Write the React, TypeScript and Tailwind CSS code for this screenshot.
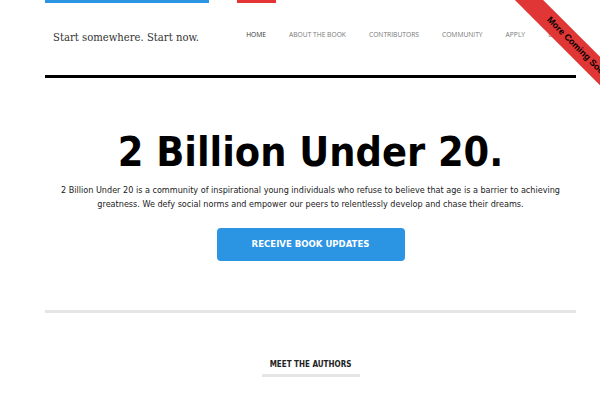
import React from "react";

const navItems = ["HOME", "ABOUT THE BOOK", "CONTRIBUTORS", "COMMUNITY", "APPLY", "BLOG"];

export default function App() {
  return (
    <div className="relative w-[600px] h-[400px] overflow-hidden bg-white">
      <div className="ml-[45px] w-[531px]">
        {/* top accent bars */}
        <div className="flex h-[3px]">
          <div className="w-[164px] h-[3px] bg-[#2b94e3]" />
          <div className="ml-[28px] w-[39px] h-[3px] bg-[#e53434]" />
        </div>

        {/* header */}
        <div className="flex items-start h-[72px]">
          <div
            className="pl-[8px] pt-[29px] text-[11.2px] text-[#333] leading-none"
            style={{ fontFamily: '"DejaVu Serif Condensed", "DejaVu Serif", serif' }}
          >
            Start somewhere. Start now.
          </div>
          <nav
            className="ml-auto flex gap-[23px] pt-[29px] pr-[10px] text-[6.7px] leading-none"
            style={{ fontFamily: '"Open Sans", sans-serif' }}
          >
            {navItems.map((n, i) => (
              <span key={n} className={i === 0 ? "text-[#333]" : "text-[#777]"}>
                {n}
              </span>
            ))}
          </nav>
        </div>
        <div className="h-[3px] bg-black" />

        {/* hero */}
        <div
          className="flex flex-col items-center pt-[54px]"
          style={{ fontFamily: '"DejaVu Sans Condensed", "DejaVu Sans", sans-serif' }}
        >
          <h1 className="text-[41px] font-bold leading-none text-black">2 Billion Under 20.</h1>
          <p className="mt-[10px] w-[540px] text-center text-[9px] leading-[14px] text-[#222]">
            2 Billion Under 20 is a community of inspirational young individuals who refuse to believe that age is a barrier to achieving greatness. We defy social norms and empower our peers to relentlessly develop and chase their dreams.
          </p>
          <button className="mt-[17px] w-[188px] h-[33px] rounded-[4px] bg-[#2b94e3] text-white text-[9.5px] font-bold">
            RECEIVE BOOK UPDATES
          </button>
        </div>

        <div className="mt-[49px] h-[3px] bg-[#e5e5e5]" />

        <div
          className="flex flex-col items-center pt-[48px]"
          style={{ fontFamily: '"DejaVu Sans Condensed", "DejaVu Sans", sans-serif' }}
        >
          <div className="text-[8px] font-bold text-[#222] leading-none">MEET THE AUTHORS</div>
          <div className="mt-[5px] w-[98px] h-[3px] bg-[#e5e5e5]" />
        </div>
      </div>

      {/* ribbon */}
      <div
        className="absolute left-[477px] top-[38px] w-[200px] h-[20px] rotate-45 bg-[#e13636] flex items-center justify-center text-[9px] font-bold text-black"
        style={{ fontFamily: '"Liberation Sans", sans-serif' }}
      >
        More Coming Soon
      </div>
    </div>
  );
}
